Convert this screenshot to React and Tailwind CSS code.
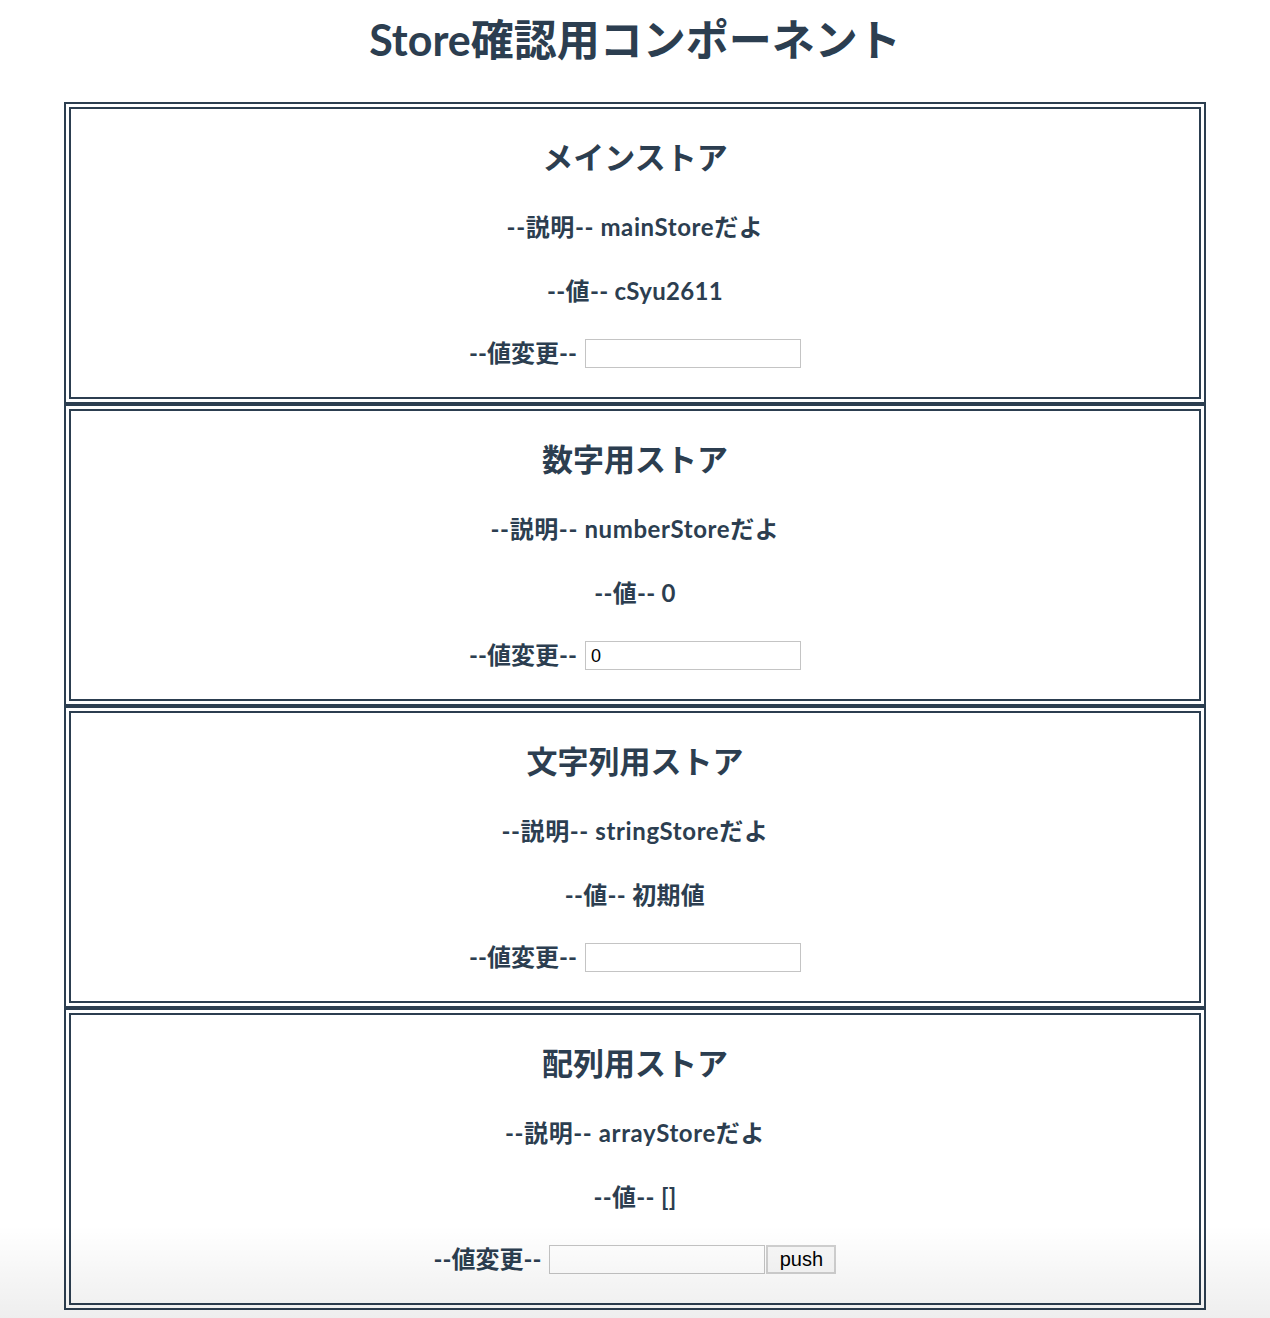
import React, { useState } from 'react';

const font = { fontFamily: '"Lato", "Noto Sans CJK JP", sans-serif' };

function StoreBox({ title, desc, value, input, setInput, withButton, onPush }) {
    return (
        <div className="border-[7px] border-double border-[#2c3e50] h-[302px] flex flex-col items-center">
            <h2 className="mt-[30px] h-[36px] leading-[36px] text-[31px] font-bold">{title}</h2>
            <p className="mt-[38px] h-[28px] leading-[28px] text-[24px] font-bold tracking-[0.6px]">--説明-- {desc}</p>
            <p className="mt-[36px] h-[28px] leading-[28px] text-[24px] font-bold tracking-[0.3px]">--値-- {value}</p>
            <div className="mt-[33px] h-[30px] flex items-center">
                <span className="text-[24px] font-bold leading-[28px]">--値変更--</span>
                <input
                    className="ml-[8px] w-[216px] h-[29px] border border-[#c4c4c4] bg-white px-[5px] pt-[2px] text-[18px] text-black outline-none"
                    style={{ fontFamily: '"Liberation Sans", Arial, sans-serif' }}
                    value={input}
                    onChange={(e) => setInput(e.target.value)}
                />
                {withButton && (
                    <button
                        onClick={onPush}
                        className="ml-[1px] w-[70px] h-[29px] border-2 border-[#d0d0d0] bg-[#f8f8f8] text-[20px] text-black leading-none"
                        style={{ fontFamily: '"Liberation Sans", Arial, sans-serif' }}
                    >
                        push
                    </button>
                )}
            </div>
        </div>
    );
}

export default function App() {
    const [mainVal, setMainVal] = useState('');
    const [numVal, setNumVal] = useState('0');
    const [strVal, setStrVal] = useState('');
    const [arrInput, setArrInput] = useState('');
    const [arr, setArr] = useState([]);

    return (
        <div className="relative min-h-[1318px] bg-white text-[#2c3e50]" style={font}>
            <h1 className="pt-[16px] h-[64px] leading-[48px] text-center text-[43px] font-bold">Store確認用コンポーネント</h1>
            <div className="mt-[38px] w-[1142px] mx-auto flex flex-col">
                <StoreBox title="メインストア" desc="mainStoreだよ" value="cSyu2611" input={mainVal} setInput={setMainVal} />
                <StoreBox title="数字用ストア" desc="numberStoreだよ" value={numVal === '' ? '0' : numVal} input={numVal} setInput={setNumVal} />
                <StoreBox title="文字列用ストア" desc="stringStoreだよ" value="初期値" input={strVal} setInput={setStrVal} />
                <StoreBox
                    title="配列用ストア"
                    desc="arrayStoreだよ"
                    value={JSON.stringify(arr)}
                    input={arrInput}
                    setInput={setArrInput}
                    withButton
                    onPush={() => { setArr([...arr, arrInput]); setArrInput(''); }}
                />
            </div>
            {/* bottom shade from the screenshot */}
            <div className="pointer-events-none absolute left-0 right-0 top-[1225px] h-[93px] bg-gradient-to-b from-transparent to-[rgba(0,0,0,0.065)]"></div>
        </div>
    );
}
